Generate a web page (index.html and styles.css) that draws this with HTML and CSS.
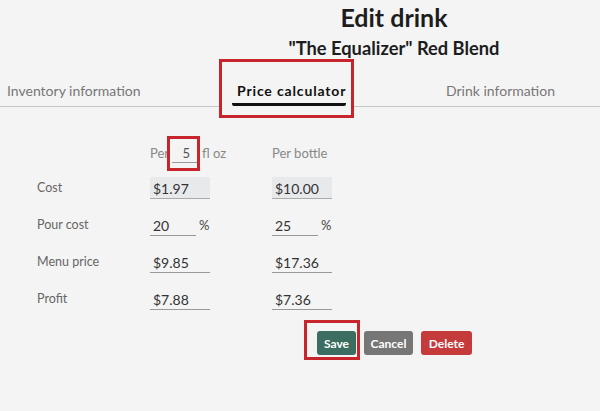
FILE: index.html
```html
<!DOCTYPE html>
<html>
<head>
<meta charset="utf-8">
<link rel="stylesheet" href="styles.css">
</head>
<body>
<header class="head">
  <h1 class="title">Edit drink</h1>
  <h2 class="subtitle">"The Equalizer" Red Blend</h2>
</header>
<nav class="tabs">
  <div class="tab tab-inv">Inventory information</div>
  <div class="tab tab-price mark"><span class="tab-label">Price calculator</span></div>
  <div class="tab tab-drink">Drink information</div>
</nav>
<main class="calc">
  <div class="row hdr">
    <div class="label"></div>
    <div class="cell per"><span>Per</span><span class="qty">5</span><span>fl oz</span></div>
    <div class="cell per">Per bottle</div>
  </div>
  <div class="row">
    <div class="label">Cost</div>
    <div class="cell"><span class="field ro">$1.97</span></div>
    <div class="cell"><span class="field ro">$10.00</span></div>
  </div>
  <div class="row">
    <div class="label">Pour cost</div>
    <div class="cell"><span class="field short">20</span><span class="pct">%</span></div>
    <div class="cell"><span class="field short">25</span><span class="pct">%</span></div>
  </div>
  <div class="row">
    <div class="label">Menu price</div>
    <div class="cell"><span class="field">$9.85</span></div>
    <div class="cell"><span class="field">$17.36</span></div>
  </div>
  <div class="row">
    <div class="label">Profit</div>
    <div class="cell"><span class="field">$7.88</span></div>
    <div class="cell"><span class="field">$7.36</span></div>
  </div>
  <div class="actions">
    <span class="mark save-mark"><button class="btn save">Save</button></span>
    <button class="btn cancel">Cancel</button>
    <button class="btn delete">Delete</button>
  </div>
</main>
</body>
</html>
```

FILE: styles.css
```css
* { box-sizing: border-box; }
html, body { margin: 0; padding: 0; }
body {
  width: 600px;
  height: 411px;
  overflow: hidden;
  background: #f4f4f4;
  font-family: Lato, "Noto Sans", sans-serif;
  color: #222;
}
.head {
  margin-left: 188px;
  height: 59px;
  text-align: center;
  padding-top: 2px;
}
.title {
  margin: 0;
  font-size: 25px;
  font-weight: 700;
  line-height: 30px;
  color: #1d1d1d;
}
.subtitle {
  margin: 5px 0 0 0;
  font-size: 18.3px;
  font-weight: 700;
  line-height: 22px;
  color: #1d1d1d;
}
.mark { border: 3px solid #c8242b; }
.tabs {
  display: flex;
  align-items: flex-start;
  height: 48px;
  border-bottom: 1px solid #c6c6c6;
}
.tab {
  font-size: 14px;
  color: #777;
  padding-top: 23px;
  line-height: 18px;
}
.tab-inv { width: 219px; padding-left: 7px; }
.tab-price {
  width: 135px;
  height: 59px;
  padding: 20px 0 0 10px;
  position: relative;
  z-index: 1;
  background: #f4f4f4;
}
.tab-label {
  display: inline-block;
  color: #111;
  font-weight: 700;
  letter-spacing: 0.85px;
  padding: 0 0 3px 5px;
  border-bottom: 3px solid #111;
  border-radius: 0 0 2px 2px;
}
.tab-drink { margin-left: 92px; }
.calc { padding-left: 37px; }
.row {
  display: flex;
  align-items: center;
  height: 37px;
}
.hdr { height: 31px; margin-top: 31px; align-items: flex-start; }
.label { width: 113px; font-size: 12.5px; color: #666; }
.cell { width: 122px; display: flex; align-items: flex-end; font-size: 13px; color: #888; }
.per { align-items: center; height: 29px; }
.qty {
  position: relative;
  display: inline-block;
  width: 28px;
  margin: 3px 2px 0 3px;
  text-align: right;
  padding-right: 10px;
  font-size: 13px;
  color: #555;
  border-bottom: 1px solid #999;
  line-height: 17px;
}
.qty::after {
  content: "";
  position: absolute;
  left: -5px;
  top: -9px;
  width: 27px;
  height: 29px;
  border: 3px solid #c8242b;
}
.field {
  display: inline-block;
  width: 60px;
  height: 22px;
  padding: 3px 3px 0;
  font-size: 14px;
  line-height: 17px;
  color: #333;
  border-bottom: 1px solid #999;
}
.field.ro { background: #e8e9eb; border-bottom-color: #aaa; }
.field.short { width: 46px; }
.pct { font-size: 13px; color: #444; margin-left: 3px; padding-bottom: 3px; }
.actions {
  display: flex;
  align-items: flex-start;
  margin: 3px 0 0 267px;
}
.save-mark {
  display: block;
  height: 40px;
  padding: 8px 1px 0 10px;
  margin-right: 4px;
}
.btn {
  display: block;
  border: none;
  color: #fff;
  font-family: inherit;
  font-size: 12px;
  font-weight: 700;
  height: 24px;
  border-radius: 3px;
  padding: 0;
}
.save { background: #3b6e60; width: 39px; }
.cancel { background: #767676; width: 49px; margin-top: 11px; margin-right: 8px; }
.delete { background: #c53b3b; width: 51px; margin-top: 11px; }
```
